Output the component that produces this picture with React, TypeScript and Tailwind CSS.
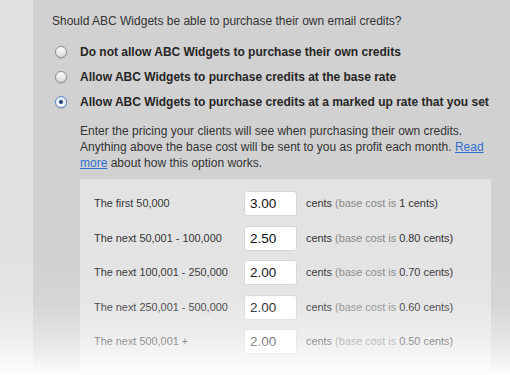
import React from "react";

const tiers = [
  { label: "The first 50,000", value: "3.00", base: "1" },
  { label: "The next 50,001 - 100,000", value: "2.50", base: "0.80" },
  { label: "The next 100,001 - 250,000", value: "2.00", base: "0.70" },
  { label: "The next 250,001 - 500,000", value: "2.00", base: "0.60" },
  { label: "The next 500,001 +", value: "2.00", base: "0.50" },
];

const options = [
  "Do not allow ABC Widgets to purchase their own credits",
  "Allow ABC Widgets to purchase credits at the base rate",
  "Allow ABC Widgets to purchase credits at a marked up rate that you set",
];

function Radio({ checked }: { checked: boolean }) {
  if (checked) {
    return (
      <span className="flex h-[12px] w-[12px] shrink-0 items-center justify-center rounded-full border border-[#5b86c4] bg-gradient-to-b from-[#dfe9f7] to-[#ffffff] shadow-[0_1px_1px_rgba(0,0,0,0.15)]">
        <span className="h-[4px] w-[4px] rounded-full bg-[#1d3f7a]" />
      </span>
    );
  }
  return (
    <span className="h-[12px] w-[12px] shrink-0 rounded-full border border-[#8e8e8e] bg-gradient-to-b from-[#fbfbfb] to-[#dcdcdc] shadow-[0_1px_1px_rgba(0,0,0,0.12)]" />
  );
}

export default function App() {
  const selected = 2;

  return (
    <div className="relative flex h-[375px] w-[510px] overflow-hidden bg-[#e3e3e3] font-['Liberation_Sans',Arial,sans-serif] text-[#333]">
      <div className="w-[33px] shrink-0 bg-[#e2e2e2]" />

      <div className="flex-1 bg-[#d1d1d1] pl-[19px] pr-[19px] pt-[13px]">
        <p className="text-[12px] leading-[16px]">
          Should ABC Widgets be able to purchase their own email credits?
        </p>

        <div className="mt-[15px] flex flex-col gap-[9px]">
          {options.map((opt, i) => (
            <label key={i} className="flex h-[16px] items-center gap-[13px] pl-[3px]">
              <Radio checked={i === selected} />
              <span className="whitespace-nowrap text-[12px] font-bold leading-[16px] text-[#262626]">{opt}</span>
            </label>
          ))}
        </div>

        <div className="pl-[28px]">
          <p className="mt-[13px] text-[12px] leading-[16px]">
            Enter the pricing your clients will see when purchasing their own credits.
            <br />
            Anything above the base cost will be sent to you as profit each month.{" "}
            <a href="#" className="text-[#2f6fd0] underline">
              Read
              <br />
              more
            </a>{" "}
            about how this option works.
          </p>

          <div className="mt-[8px] flex flex-col gap-[9.5px] bg-[#e3e3e3] pl-[14px] pt-[12px] pb-[20px]">
            {tiers.map((t) => (
              <div key={t.label} className="flex h-[25px] items-center">
                <span className="w-[150px] shrink-0 text-[10.9px] text-[#333]">{t.label}</span>
                <input
                  readOnly
                  value={t.value}
                  className="h-[25px] w-[53px] rounded-[3px] border border-[#d6d6d6] bg-white px-[5px] text-[13.5px] text-[#111] outline-none"
                />
                <span className="ml-[9px] text-[10.9px] text-[#333]">
                  cents <span className="text-[#888]">(base cost is</span> {t.base} cents)
                </span>
              </div>
            ))}
          </div>
        </div>
      </div>

      <div className="pointer-events-none absolute inset-x-0 bottom-0 h-[120px] bg-[linear-gradient(to_bottom,rgba(255,255,255,0)_0%,rgba(255,255,255,0.1)_40%,rgba(255,255,255,0.42)_70%,rgba(255,255,255,0.95)_100%)]" />
    </div>
  );
}
